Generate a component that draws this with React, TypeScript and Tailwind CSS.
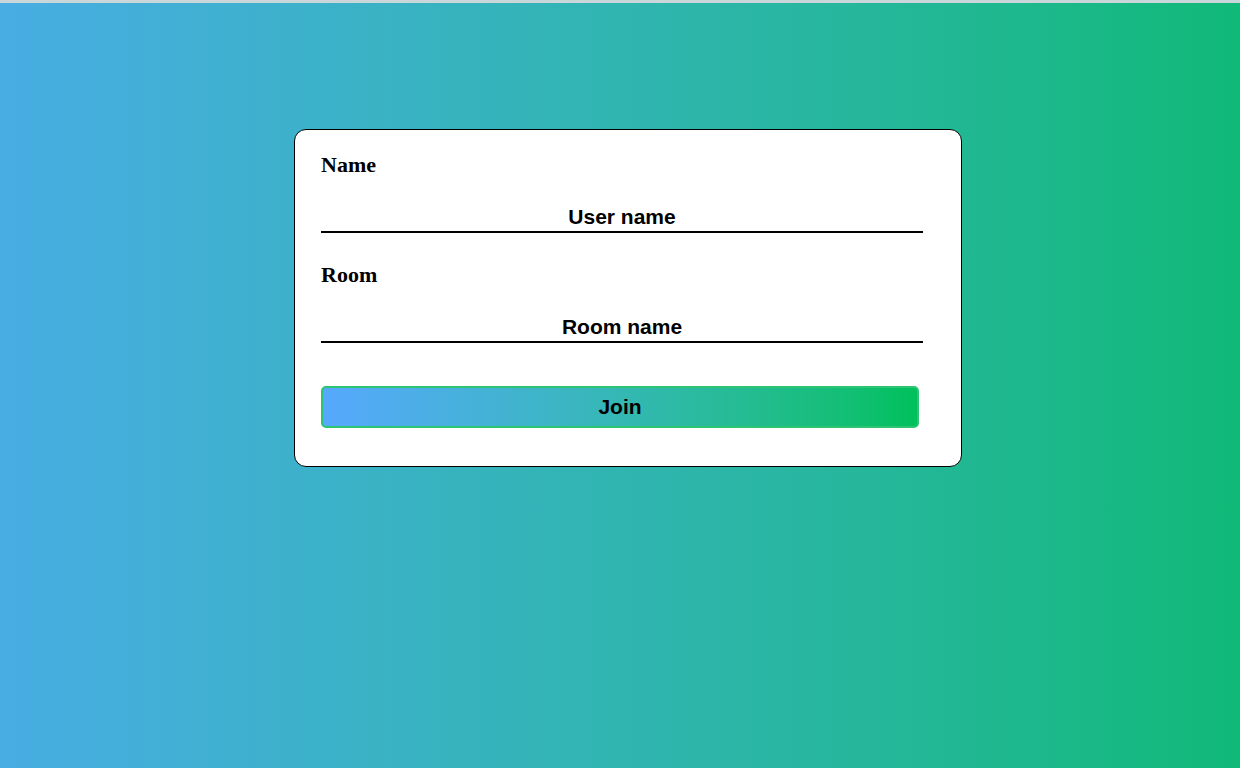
import { useState } from "react";

export default function App() {
  const [name, setName] = useState("");
  const [room, setRoom] = useState("");

  return (
    <div className="min-h-[768px] w-full flex flex-col bg-gradient-to-r from-[#48ade3] to-[#10b978]">
      {/* thin top strip */}
      <div className="h-[3px] w-full bg-[#c9d6da]" />

      <div className="flex justify-center pl-[16px] pt-[126px]">
        <form
          onSubmit={(e) => e.preventDefault()}
          className="w-[668px] bg-white border border-black rounded-[12px] pl-[26px] pr-[38px] pt-[20px] pb-[38px]"
        >
          <label className="block font-['Liberation_Serif',serif] font-bold text-[22px] leading-[30px] text-black">
            Name
          </label>
          <input
            value={name}
            onChange={(e) => setName(e.target.value)}
            placeholder="User name"
            className="mt-[23px] w-full h-[30px] border-b-2 border-black text-center outline-none font-['Liberation_Sans',Arial,sans-serif] font-bold text-[21px] text-black placeholder:text-black"
          />

          <label className="block mt-[27px] font-['Liberation_Serif',serif] font-bold text-[22px] leading-[30px] text-black">
            Room
          </label>
          <input
            value={room}
            onChange={(e) => setRoom(e.target.value)}
            placeholder="Room name"
            className="mt-[23px] w-full h-[30px] border-b-2 border-black text-center outline-none font-['Liberation_Sans',Arial,sans-serif] font-bold text-[21px] text-black placeholder:text-black"
          />

          <button
            type="submit"
            className="mt-[43px] w-[598px] h-[42px] rounded-[5px] border-2 border-[#2ec572] bg-gradient-to-r from-[#56a8fd] to-[#00c05c] font-['Liberation_Sans',Arial,sans-serif] font-bold text-[21px] text-black"
          >
            Join
          </button>
        </form>
      </div>
    </div>
  );
}
